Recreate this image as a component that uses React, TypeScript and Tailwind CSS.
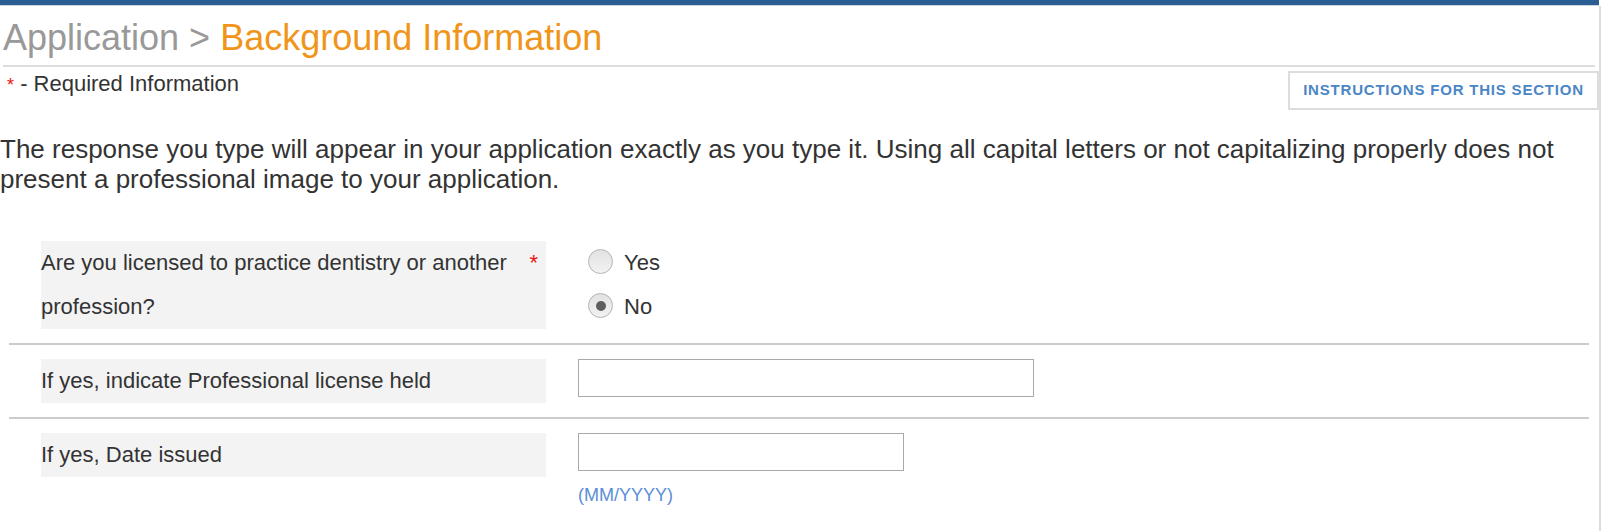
import React from "react";

function Radio({ checked, label }: { checked?: boolean; label: string }) {
  return (
    <div className="flex h-[44px] items-start">
      <span className="ml-[11px] mt-[8px] flex h-[25px] w-[25px] items-center justify-center rounded-full border border-[#b3b3b3] bg-gradient-to-b from-[#e2e2e2] to-[#f2f2f2]">
        {checked ? <span className="block h-[10px] w-[10px] rounded-full bg-[#5e5e5e]" /> : null}
      </span>
      <span className="ml-[11px] text-[22px] leading-[44px] text-[#333]">{label}</span>
    </div>
  );
}

export default function App() {
  return (
    <div
      className="min-h-[531px] w-[1620px] bg-white text-[#333]"
      style={{ fontFamily: '"Liberation Sans", Arial, Helvetica, sans-serif' }}
    >
      <div className="h-[5px] w-[1599px] bg-[#2a5e92]" />
      <div className="h-px w-[1599px] bg-[#cdd6df]" />
      <div className="min-h-[525px] w-[1601px] border-r-2 border-[#dddddd]">
        {/* Title */}
        <div className="ml-[3px] mr-[4px] border-b-2 border-[#dddddd] pb-[7px] pt-[11px]">
          <h1 className="text-[36px] font-normal leading-[41px]">
            <span className="text-[#999999]">Application &gt; </span>
            <span className="text-[#f0951a]">Background Information</span>
          </h1>
        </div>

        {/* Required + instructions */}
        <div className="mt-[4px] flex items-start justify-between">
          <div className="pl-[7px] text-[22px] leading-[25px] text-[#333]">
            <span className="text-[18px] text-[#ee1111]">*</span> - Required Information
          </div>
          <button className="flex h-[39px] w-[311px] items-center justify-center border-2 border-[#dddddd] bg-white text-[15px] font-bold tracking-[0.8px] text-[#4a86c6]">
            INSTRUCTIONS FOR THIS SECTION
          </button>
        </div>

        {/* Paragraph */}
        <p className="mt-[24px] text-[26px] leading-[30px] text-[#333]">
          The response you type will appear in your application exactly as you type it. Using all capital letters or not capitalizing properly does not present a professional image to your application.
        </p>

        {/* Form */}
        <div className="ml-[9px] mr-[10px] mt-[47px]">
          <div className="flex border-b-2 border-[#cccccc] pb-[14px] pl-[32px]">
            <div className="flex w-[505px] bg-[#f3f3f3] text-[22px] leading-[44px]">
              <span className="flex-1">Are you licensed to practice dentistry or another profession?</span>
              <span className="shrink-0 pr-[8px] text-[#ee1111]">*</span>
            </div>
            <div className="ml-[31px] flex flex-col">
              <Radio label="Yes" />
              <Radio label="No" checked />
            </div>
          </div>

          <div className="flex border-b-2 border-[#cccccc] pb-[14px] pl-[32px] pt-[14px]">
            <div className="w-[505px] bg-[#f3f3f3] text-[22px] leading-[44px]">
              If yes, indicate Professional license held
            </div>
            <div className="ml-[32px]">
              <input
                type="text"
                className="h-[38px] w-[456px] border border-[#a9a9a9] bg-white outline-none"
              />
            </div>
          </div>

          <div className="flex pl-[32px] pt-[14px]">
            <div className="h-[44px] w-[505px] bg-[#f3f3f3] text-[22px] leading-[44px]">
              If yes, Date issued
            </div>
            <div className="ml-[32px] flex flex-col">
              <input
                type="text"
                className="h-[38px] w-[326px] border border-[#a9a9a9] bg-white outline-none"
              />
              <span className="mt-[14px] text-[18px] leading-[21px] text-[#5b8ed6]">(MM/YYYY)</span>
            </div>
          </div>
        </div>
      </div>
    </div>
  );
}
